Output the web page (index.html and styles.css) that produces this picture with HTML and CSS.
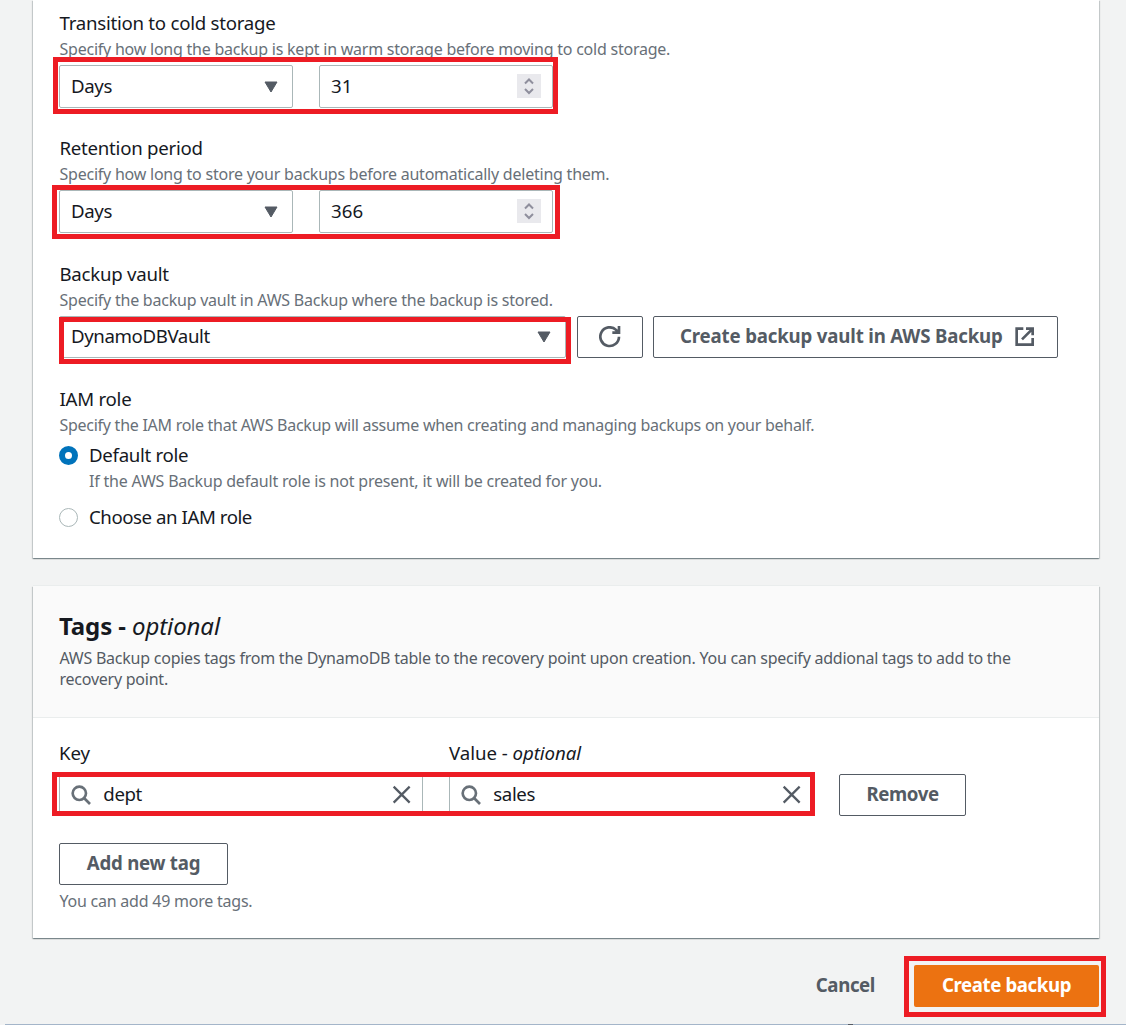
FILE: index.html
```html
<!DOCTYPE html>
<html lang="en">
<head>
    <meta charset="UTF-8">
    <meta name="viewport" content="width=device-width, initial-scale=1.0">
    <title>Create backup</title>
    <link rel="stylesheet" href="styles.css">
</head>
<body>
    <main class="page">
        <section class="panel settings">
            <div class="field">
                <div class="label">Transition to cold storage</div>
                <div class="description">Specify how long the backup is kept in warm storage before moving to cold storage.</div>
                <div class="controls">
                    <div class="select">Days<svg class="caret" viewBox="0 0 14 12"><path d="M1 1h12L7 11z"/></svg></div>
                    <div class="input number">31
                        <span class="spinner"><svg viewBox="0 0 24 24"><path d="M8 9.5l4-4 4 4M8 15l4 4 4-4"/></svg></span>
                    </div>
                    <div class="highlight highlight-cold"></div>
                </div>
            </div>

            <div class="field">
                <div class="label">Retention period</div>
                <div class="description">Specify how long to store your backups before automatically deleting them.</div>
                <div class="controls">
                    <div class="select">Days<svg class="caret" viewBox="0 0 14 12"><path d="M1 1h12L7 11z"/></svg></div>
                    <div class="input number">366
                        <span class="spinner"><svg viewBox="0 0 24 24"><path d="M8 9.5l4-4 4 4M8 15l4 4 4-4"/></svg></span>
                    </div>
                    <div class="highlight highlight-retention"></div>
                </div>
            </div>

            <div class="field vault">
                <div class="label">Backup vault</div>
                <div class="description">Specify the backup vault in AWS Backup where the backup is stored.</div>
                <div class="controls">
                    <div class="select">DynamoDBVault<svg class="caret" viewBox="0 0 14 12"><path d="M1 1h12L7 11z"/></svg></div>
                    <button class="btn btn-icon" aria-label="Refresh">
                        <svg class="icon" viewBox="0 0 16 16"><path d="M15 8a7 7 0 1 1-2.2-5.1L14.5 5M10 5h5V0"/></svg>
                    </button>
                    <button class="btn btn-vault">Create backup vault in AWS Backup
                        <svg class="icon" viewBox="0 0 16 16"><path d="M7 2H2v12h12V9M9 2h5v5M6 10l7.5-7.5"/></svg>
                    </button>
                    <div class="highlight highlight-vault"></div>
                </div>
            </div>

            <div class="field role">
                <div class="label">IAM role</div>
                <div class="description">Specify the IAM role that AWS Backup will assume when creating and managing backups on your behalf.</div>
                <div class="radio-row">
                    <span class="radio checked"></span>
                    <div>
                        <div class="radio-label">Default role</div>
                        <div class="description">If the AWS Backup default role is not present, it will be created for you.</div>
                    </div>
                </div>
                <div class="radio-row">
                    <span class="radio"></span>
                    <div class="radio-label">Choose an IAM role</div>
                </div>
            </div>
        </section>

        <section class="panel tags">
            <header class="panel-header">
                <h2>Tags - <i>optional</i></h2>
                <p>AWS Backup copies tags from the DynamoDB table to the recovery point upon creation. You can specify addional tags to add to the recovery point.</p>
            </header>
            <div class="panel-body">
                <div class="tag-labels">
                    <div>Key</div>
                    <div>Value - <i>optional</i></div>
                </div>
                <div class="controls">
                    <div class="input search">
                        <svg class="icon glass" viewBox="0 0 16 16"><circle cx="7" cy="7" r="5"/><path d="M10.7 10.7L15 15"/></svg>
                        <span>dept</span>
                        <svg class="icon clear" viewBox="0 0 16 16"><path d="M2 2l12 12M14 2L2 14"/></svg>
                    </div>
                    <div class="input search">
                        <svg class="icon glass" viewBox="0 0 16 16"><circle cx="7" cy="7" r="5"/><path d="M10.7 10.7L15 15"/></svg>
                        <span>sales</span>
                        <svg class="icon clear" viewBox="0 0 16 16"><path d="M2 2l12 12M14 2L2 14"/></svg>
                    </div>
                    <button class="btn btn-remove">Remove</button>
                    <div class="highlight highlight-tags"></div>
                </div>
                <button class="btn btn-add">Add new tag</button>
                <div class="description hint">You can add 49 more tags.</div>
            </div>
        </section>

        <div class="actions">
            <button class="btn btn-link">Cancel</button>
            <div class="primary">
                <button class="btn btn-primary">Create backup</button>
                <div class="highlight highlight-create"></div>
            </div>
        </div>
        <footer class="status-edge"><span></span></footer>
    </main>
</body>
</html>
```

FILE: styles.css
```css
* {
    box-sizing: border-box;
}
body {
    margin: 0;
    background: #f2f3f3;
    color: #16191f;
    font-family: "Noto Sans", "Open Sans", sans-serif;
    font-size: 18.67px;
    letter-spacing: -0.4px;
}
.page {
    display: flex;
    flex-direction: column;
    height: 1025px;
    overflow: hidden;
}
.panel {
    width: 1066px;
    margin-left: 33px;
    background: #fff;
    box-shadow: 0 1px 1px 0 rgba(0,28,36,0.3), 1px 1px 1px 0 rgba(0,28,36,0.15), -1px 1px 1px 0 rgba(0,28,36,0.15), 0 -1px 0 0 #eaeded;
}
.settings {
    height: 558px;
    padding: 9px 26px 0;
}
.field {
    margin-bottom: 26px;
}
.field + .vault {
    margin-top: 27px;
}
.vault {
    margin-bottom: 27px;
}
.label {
    height: 29px;
    padding-left: 0.5px;
    line-height: 27px;
    letter-spacing: -0.26px;
}
.description {
    height: 21px;
    padding-left: 0.5px;
    font-size: 16px;
    line-height: 23px;
    color: #687078;
    letter-spacing: -0.23px;
    white-space: nowrap;
}
.role > .description {
    letter-spacing: -0.27px;
}
.radio-row .description {
    padding-left: 0;
    letter-spacing: -0.2px;
}
.controls {
    position: relative;
    display: flex;
    margin-top: 6px;
}
.select, .input {
    display: flex;
    align-items: center;
    width: 234px;
    height: 43px;
    margin-right: 26px;
    padding: 0 11px 2px;
    border: 1px solid #aab7b8;
    border-radius: 2px;
    background: #fff;
}
.number {
    letter-spacing: 0.1px;
}
.caret {
    width: 14px;
    height: 12px;
    margin: 2px 3px 0 auto;
    fill: #545b64;
    stroke: #545b64;
    stroke-width: 1;
    stroke-linejoin: round;
}
.spinner {
    width: 24px;
    height: 24px;
    margin-left: auto;
    background: #e9e9ed;
}
.spinner svg {
    display: block;
    fill: none;
    stroke: #8f8f9d;
    stroke-width: 2;
}
.vault .select {
    width: 507px;
    height: 42px;
    margin-right: 11px;
    padding-bottom: 3px;
}
.vault .caret {
    margin-top: 3px;
}
.icon {
    width: 21.33px;
    height: 21.33px;
    fill: none;
    stroke: #545b64;
    stroke-width: 2;
    flex: none;
}
.btn {
    display: flex;
    align-items: center;
    justify-content: center;
    height: 42px;
    padding: 0 0 3px;
    border: 1px solid #545b64;
    border-radius: 2px;
    background: #fff;
    color: #545b64;
    font-family: inherit;
    font-size: 18.67px;
    font-weight: 700;
    letter-spacing: -0.4px;
    white-space: nowrap;
}
.btn-icon {
    width: 66px;
    margin-right: 10px;
    padding: 0;
}
.btn-vault {
    width: 405px;
    padding-left: 4px;
    gap: 11px;
    letter-spacing: -0.17px;
}
.btn-vault .icon {
    margin-top: 3px;
}
.radio-row {
    display: flex;
}
.radio {
    width: 19px;
    height: 19px;
    margin: 11px 11px 0 0;
    border: 1px solid #aab7b8;
    border-radius: 50%;
    background: #fff;
}
.radio.checked {
    border: 6px solid #0073bb;
}
.radio-label {
    height: 29px;
    margin-top: 6px;
    line-height: 27px;
    letter-spacing: -0.3px;
}
.radio-row + .radio-row {
    margin-top: 11px;
}
.radio-row + .radio-row .radio {
    margin-top: 6px;
}
.radio-row + .radio-row .radio-label {
    margin-top: 1px;
    letter-spacing: -0.45px;
}
.tags {
    height: 352px;
    margin-top: 28px;
}
.panel-header {
    height: 132px;
    padding: 24px 26px 0;
    border-bottom: 1px solid #eaeded;
    background: #fafafa;
}
h2 {
    margin: 0;
    font-size: 24px;
    line-height: 32px;
    letter-spacing: -0.1px;
}
h2 i {
    font-weight: 400;
}
.panel-header p {
    width: 980px;
    margin: 6px 0 0;
    padding-left: 0.5px;
    font-size: 16px;
    line-height: 21px;
    color: #545b64;
    letter-spacing: -0.24px;
}
.panel-body {
    padding: 21px 26px 0;
}
.tag-labels {
    display: grid;
    grid-template-columns: 390px 390px;
    height: 29px;
    line-height: 27px;
    letter-spacing: -0.05px;
}
.search {
    width: 364px;
    height: 42px;
    padding: 0 10px 3px;
}
.search .icon {
    margin-top: 3px;
}
.search .glass {
    margin-right: 12px;
    stroke: #687078;
}
.search .clear {
    margin-left: auto;
    stroke-width: 1.7;
}
.btn-remove {
    width: 127px;
}
.btn-add {
    width: 169px;
    margin-top: 27px;
    letter-spacing: -0.25px;
}
.hint {
    margin-top: 5px;
}
.actions {
    display: flex;
    justify-content: flex-end;
    margin: 27px 27px 0 0;
}
.primary {
    position: relative;
}
.btn-link {
    margin-right: 39px;
    border: 0;
    background: none;
}
.btn-primary {
    width: 185px;
    border: 0;
    background: #ec7211;
    color: #fff;
}
.status-edge {
    height: 1px;
    margin: auto 0 0 5px;
    background: #a4b5c9;
}
.status-edge span {
    display: block;
    width: 5px;
    height: 1px;
    margin-left: 843px;
    background: #545b64;
}

/* red callout frames drawn over the form */
.highlight {
    position: absolute;
    border: 5px solid #ed1c24;
    pointer-events: none;
}
.highlight-cold {
    left: -6px;
    top: -8px;
    width: 505px;
    height: 57px;
}
.highlight-retention {
    left: -7px;
    top: -5px;
    width: 508px;
    height: 54px;
}
.highlight-vault {
    left: 0;
    top: 1px;
    width: 512px;
    height: 47px;
}
.highlight-tags {
    left: -7px;
    top: -2px;
    width: 763px;
    height: 44px;
}
.highlight-create {
    left: -10px;
    top: -9px;
    width: 202px;
    height: 61px;
}
```
